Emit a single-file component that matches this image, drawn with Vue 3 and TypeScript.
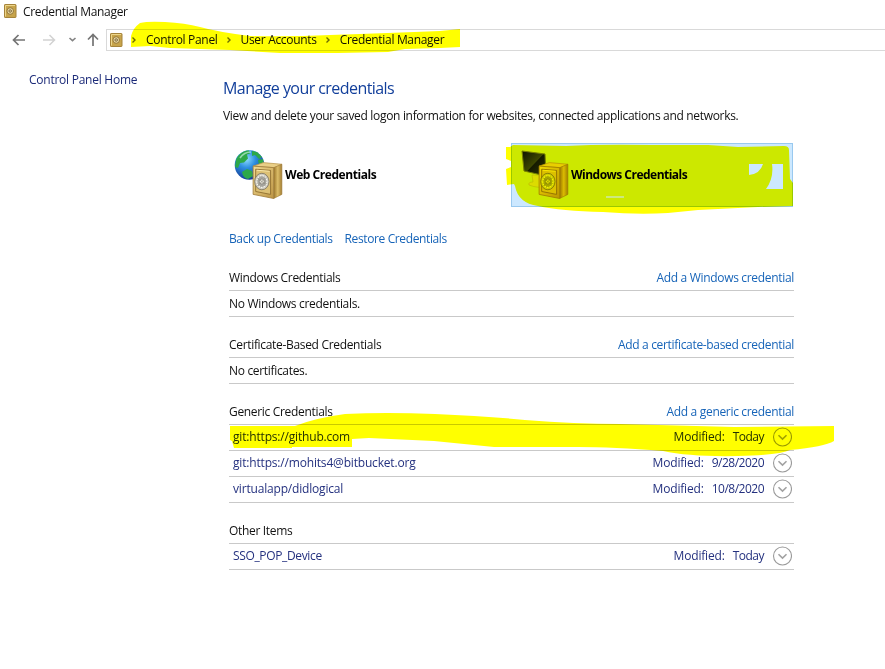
<script setup lang="ts">
interface Item {
  name: string
  modified: string
}
interface Section {
  title: string
  action?: string
  empty?: string
  items: Item[]
}

const crumbs: string[] = ['Control Panel', 'User Accounts', 'Credential Manager']

const sections: Section[] = [
  { title: 'Windows Credentials', action: 'Add a Windows credential', empty: 'No Windows credentials.', items: [] },
  { title: 'Certificate-Based Credentials', action: 'Add a certificate-based credential', empty: 'No certificates.', items: [] },
  {
    title: 'Generic Credentials',
    action: 'Add a generic credential',
    items: [
      { name: 'git:https://github.com', modified: 'Today' },
      { name: 'git:https://mohits4@bitbucket.org', modified: '9/28/2020' },
      { name: 'virtualapp/didlogical', modified: '10/8/2020' },
    ],
  },
  { title: 'Other Items', items: [{ name: 'SSO_POP_Device', modified: 'Today' }] },
]
</script>

<template>
  <div class="window">
    <svg class="defs" width="0" height="0" aria-hidden="true">
      <defs>
        <linearGradient id="gold" x1="0" y1="0" x2="1" y2="1">
          <stop offset="0" stop-color="#f3dc93" />
          <stop offset="1" stop-color="#bd9544" />
        </linearGradient>
        <linearGradient id="goldSide" x1="0" y1="0" x2="1" y2="0">
          <stop offset="0" stop-color="#9c772c" />
          <stop offset="0.5" stop-color="#dcbd68" />
          <stop offset="1" stop-color="#a17c32" />
        </linearGradient>
        <radialGradient id="sea" cx="0.4" cy="0.3" r="0.75">
          <stop offset="0" stop-color="#8edcff" />
          <stop offset="0.4" stop-color="#2e8fe0" />
          <stop offset="1" stop-color="#12348f" />
        </radialGradient>
        <linearGradient id="screen" x1="0" y1="0" x2="1" y2="1">
          <stop offset="0" stop-color="#101418" />
          <stop offset="0.5" stop-color="#3d474a" />
          <stop offset="0.52" stop-color="#151a1d" />
          <stop offset="1" stop-color="#303a38" />
        </linearGradient>
        <symbol id="vault" viewBox="0 0 13 14">
          <rect x="0.5" y="0.5" width="11.5" height="13" rx="0.6" fill="#c7a44b" stroke="#a5833a" />
          <path d="M1.5 12.5V1.5h9.5" fill="none" stroke="#ecd58a" />
          <circle cx="6.2" cy="7" r="3.3" fill="#ead9a0" stroke="#94773a" />
          <circle cx="6.2" cy="7" r="1.3" fill="#d8c895" stroke="#6e5830" stroke-width="0.8" />
        </symbol>
        <symbol id="safe" viewBox="0 0 30 36">
          <path d="M1 4 11 0.6 29 2.2 21.500 5.500Z" fill="#e9cf87" stroke="#b8944a" stroke-width="0.7" />
          <path d="M21 5.500 29 2.200V31.500L21 35.500Z" fill="url(#goldSide)" stroke="#a07d3a" stroke-width="0.6" />
          <path d="M1 4 21 5.500V35.500L1 31.500Z" fill="url(#gold)" stroke="#a07d3a" stroke-width="0.8" />
          <path d="M3.500 7 18 8.200V31.500L3.500 28.700Z" fill="#dcc074" stroke="#87662a" stroke-width="0.8" />
          <path d="M4.500 8 17 9" stroke="#fff0b5" stroke-width="0.8" />
          <ellipse cx="9.500" cy="19" rx="7" ry="8" fill="#d0cdc2" stroke="#77705f" stroke-width="0.8" />
          <ellipse cx="9.500" cy="19" rx="4.900" ry="5.700" fill="#a6a59e" stroke="#f4f4ee" stroke-width="1.2" stroke-dasharray="1.500 1" />
          <circle cx="9.500" cy="19" r="2.400" fill="#e6e4dc" stroke="#77736a" stroke-width="0.6" />
          <path d="m5.500 23 8-8M5.500 16l8 6" stroke="#8a877d" stroke-width="0.6" />
        </symbol>
      </defs>
    </svg>

    <header class="titlebar">
      <svg class="vault" width="13" height="14"><use href="#vault" /></svg>
      <span class="apptitle">Credential Manager</span>
    </header>

    <nav class="navbar">
      <div class="arrows">
        <svg width="106" height="22" viewBox="0 0 106 22" fill="none">
          <path d="M25 11H13.500M18.500 6 13.500 11l5 5" stroke="#747474" stroke-width="1.7" />
          <path d="M43 11h11.500M49.500 6l5 5-5 5" stroke="#d2d2d2" stroke-width="1.5" />
          <path d="m69.500 9 3 2.700 3-2.700" stroke="#848484" stroke-width="1.600" />
          <path d="M93 17V5.500M88 10.500l5-5 5 5" stroke="#747474" stroke-width="1.7" />
        </svg>
      </div>
      <div class="address">
        <svg class="vault" width="13" height="14"><use href="#vault" /></svg>
        <div v-for="crumb in crumbs" :key="crumb" class="crumb">
          <svg width="6" height="8" viewBox="0 0 6 8" fill="none">
            <path d="m1.500 1.500 2.500 2.500-2.500 2.500" stroke="#6b6b6b" stroke-width="1.400" />
          </svg>
          <span>{{ crumb }}</span>
        </div>
      </div>
    </nav>

    <div class="body">
      <aside><a class="home">Control Panel Home</a></aside>
      <main>
        <h1>Manage your credentials</h1>
        <p class="lead">View and delete your saved logon information for websites, connected applications and networks.</p>

        <div class="vaults">
          <div class="card">
            <svg width="50" height="52" viewBox="0 0 50 52">
              <circle cx="15.500" cy="16" r="14.800" fill="url(#sea)" />
              <path d="M2 11C5 4 10 1.500 15 1.500l1 3-3 1 1 4-4 4-4 .5-2 5-3-1ZM18 2l5 1 5 5-3 2-4-4-3 1ZM8 23l5-3 5 2 1 5-5 3Q9 29 8 23ZM24 11l5-1 1 7-5-1Z" fill="#2da849" />
              <path d="M6 9q4-6 11-6" stroke="#bfeed8" stroke-width="1.500" fill="none" opacity="0.700" />
              <use href="#safe" x="18" y="13" width="31" height="37" />
            </svg>
            <span class="web">Web Credentials</span>
          </div>
          <div class="card selected">
            <svg width="50" height="52" viewBox="0 0 50 52">
              <path d="M12 26h8l2 7q6 1 5 4-8 3-18-1-1-3 4-3Z" fill="#dcdccb" stroke="#b8b8a8" stroke-width="0.600" />
              <path d="M2 2 25 5l1 22L4 22Z" fill="url(#screen)" stroke="#787f77" stroke-width="1" />
              <use href="#safe" x="18" y="13" width="31" height="37" />
            </svg>
            <span>Windows Credentials</span>
          </div>
        </div>

        <div class="links">
          <a>Back up Credentials</a>
          <a>Restore Credentials</a>
        </div>

        <section v-for="s in sections" :key="s.title">
          <div class="head">
            <span>{{ s.title }}</span>
            <a v-if="s.action">{{ s.action }}</a>
          </div>
          <div v-if="s.empty" class="row empty">{{ s.empty }}</div>
          <div v-for="it in s.items" :key="it.name" class="row item">
            <span class="name">{{ it.name }}</span>
            <span class="label">Modified:</span>
            <span class="date">{{ it.modified }}</span>
            <svg class="expand" width="20" height="20" viewBox="0 0 20 20" fill="none">
              <circle cx="10.500" cy="10" r="9" stroke="#9b9b9b" stroke-width="1.100" />
              <path d="m6.500 8.200 4 3.900 4-3.900" stroke="#a2a2a2" stroke-width="1.600" />
            </svg>
          </div>
        </section>
      </main>
    </div>

    <svg class="marker" width="885" height="669" viewBox="0 0 885 669" fill="#ffff00" aria-hidden="true">
      <path d="M131 47V36q2-8 9-13 8-2 25-1 20 1 35 5 18 5 50 9 40 1 80-1 60-2 110-4l20-2v18l-20 1-35 1-17 3-50 1h-58l-50-3-60-2-20-2Z" />
      <path fill-rule="evenodd" d="M506 147h4l3-2 53 1q35-2 85-1h57l30 2 46-1q5 0 5 4l1 29 3 4v23l-35 1-60 3-30 3q-30 2-65-1-42-1-65-6-20-3-23-20l-1-2-7 1-1-16 5-2v-6l-5-2ZM749 164v11q11-1 14-11ZM772 164q2 14-6 25h17v-25ZM606 197.500v-1h18v1Z" />
      <path d="M230 426h65q20-8 50-12 40-2 90 0 50 2 90 6 50 4 95 4l114 3 100-1v15q-10 6-44 9-10 5-52 6-47 1-75-5-50-4-85-4H494l-60-6-65-3-17 1v8h-60v1h-58l-2-7-2-1Z" />
    </svg>
  </div>
</template>

<style>
body {
  margin: 0;
  background: #fff;
}
</style>

<style scoped>
.window {
  position: relative;
  width: 885px;
  height: 669px;
  overflow: hidden;
  background: #fff;
  color: #111;
  font: 12px/16px "Open Sans", "Noto Sans", sans-serif;
  letter-spacing: -0.32px;
  white-space: nowrap;
}
.defs {
  display: block;
}
.titlebar {
  display: flex;
  align-items: center;
  gap: 6px;
  height: 24px;
  padding-left: 4px;
}
.vault {
  flex: none;
}
.titlebar .vault {
  margin-bottom: 2px;
}
.navbar {
  display: flex;
  height: 22px;
  margin-top: 5px;
}
.arrows {
  width: 106px;
  flex: none;
}
.arrows svg {
  display: block;
}
.address {
  flex: 1;
  display: flex;
  align-items: center;
  box-sizing: border-box;
  padding-left: 3px;
  border: 1px solid #d9d9d9;
  border-right: 0;
}
.crumb {
  display: flex;
  align-items: center;
  gap: 9px;
  margin-left: 8px;
}
.body {
  display: flex;
}
aside {
  box-sizing: border-box;
  width: 223px;
  padding: 21px 0 0 29px;
  flex: none;
}
.home {
  color: #1b2a78;
  letter-spacing: -0.25px;
}
main {
  width: 571px;
  padding-top: 25px;
}
h1 {
  margin: 0;
  font-size: 16px;
  line-height: 24px;
  font-weight: 400;
  letter-spacing: -0.56px;
  color: #123f9b;
}
.lead {
  margin: 8px 0 0;
}
.vaults {
  display: flex;
  gap: 4px;
  margin-top: 19px;
  padding-left: 2px;
}
.card {
  box-sizing: border-box;
  width: 282px;
  height: 64px;
  display: flex;
  align-items: center;
  gap: 1px;
  padding-left: 8px;
  border: 1px solid transparent;
  font-weight: 700;
  letter-spacing: -0.52px;
  color: #000;
}
.card .web {
  letter-spacing: -0.45px;
}
.card.selected {
  background: #cce8ff;
  border-color: #99c9ef;
}
.links {
  display: flex;
  gap: 12px;
  margin: 24px 0 19px;
  padding-left: 6px;
  letter-spacing: -0.38px;
}
.links a,
.head a {
  color: #1764b8;
}
section {
  margin: 0 0 16px 6px;
}
.head,
.row {
  display: flex;
  align-items: center;
  box-sizing: border-box;
  border-bottom: 1px solid #c9c9c9;
}
.head {
  justify-content: space-between;
  height: 25px;
}
.row {
  height: 26px;
}
.item {
  padding: 0 2px 1px 4px;
  color: #24317f;
}
.name {
  flex: 1;
  letter-spacing: -0.18px;
}
section:last-child .name {
  letter-spacing: -0.35px;
}
.label {
  letter-spacing: -0.18px;
}
.date {
  margin: 0 8px;
  letter-spacing: -0.5px;
}
.marker {
  position: absolute;
  inset: 0;
  mix-blend-mode: multiply;
  pointer-events: none;
}
</style>
